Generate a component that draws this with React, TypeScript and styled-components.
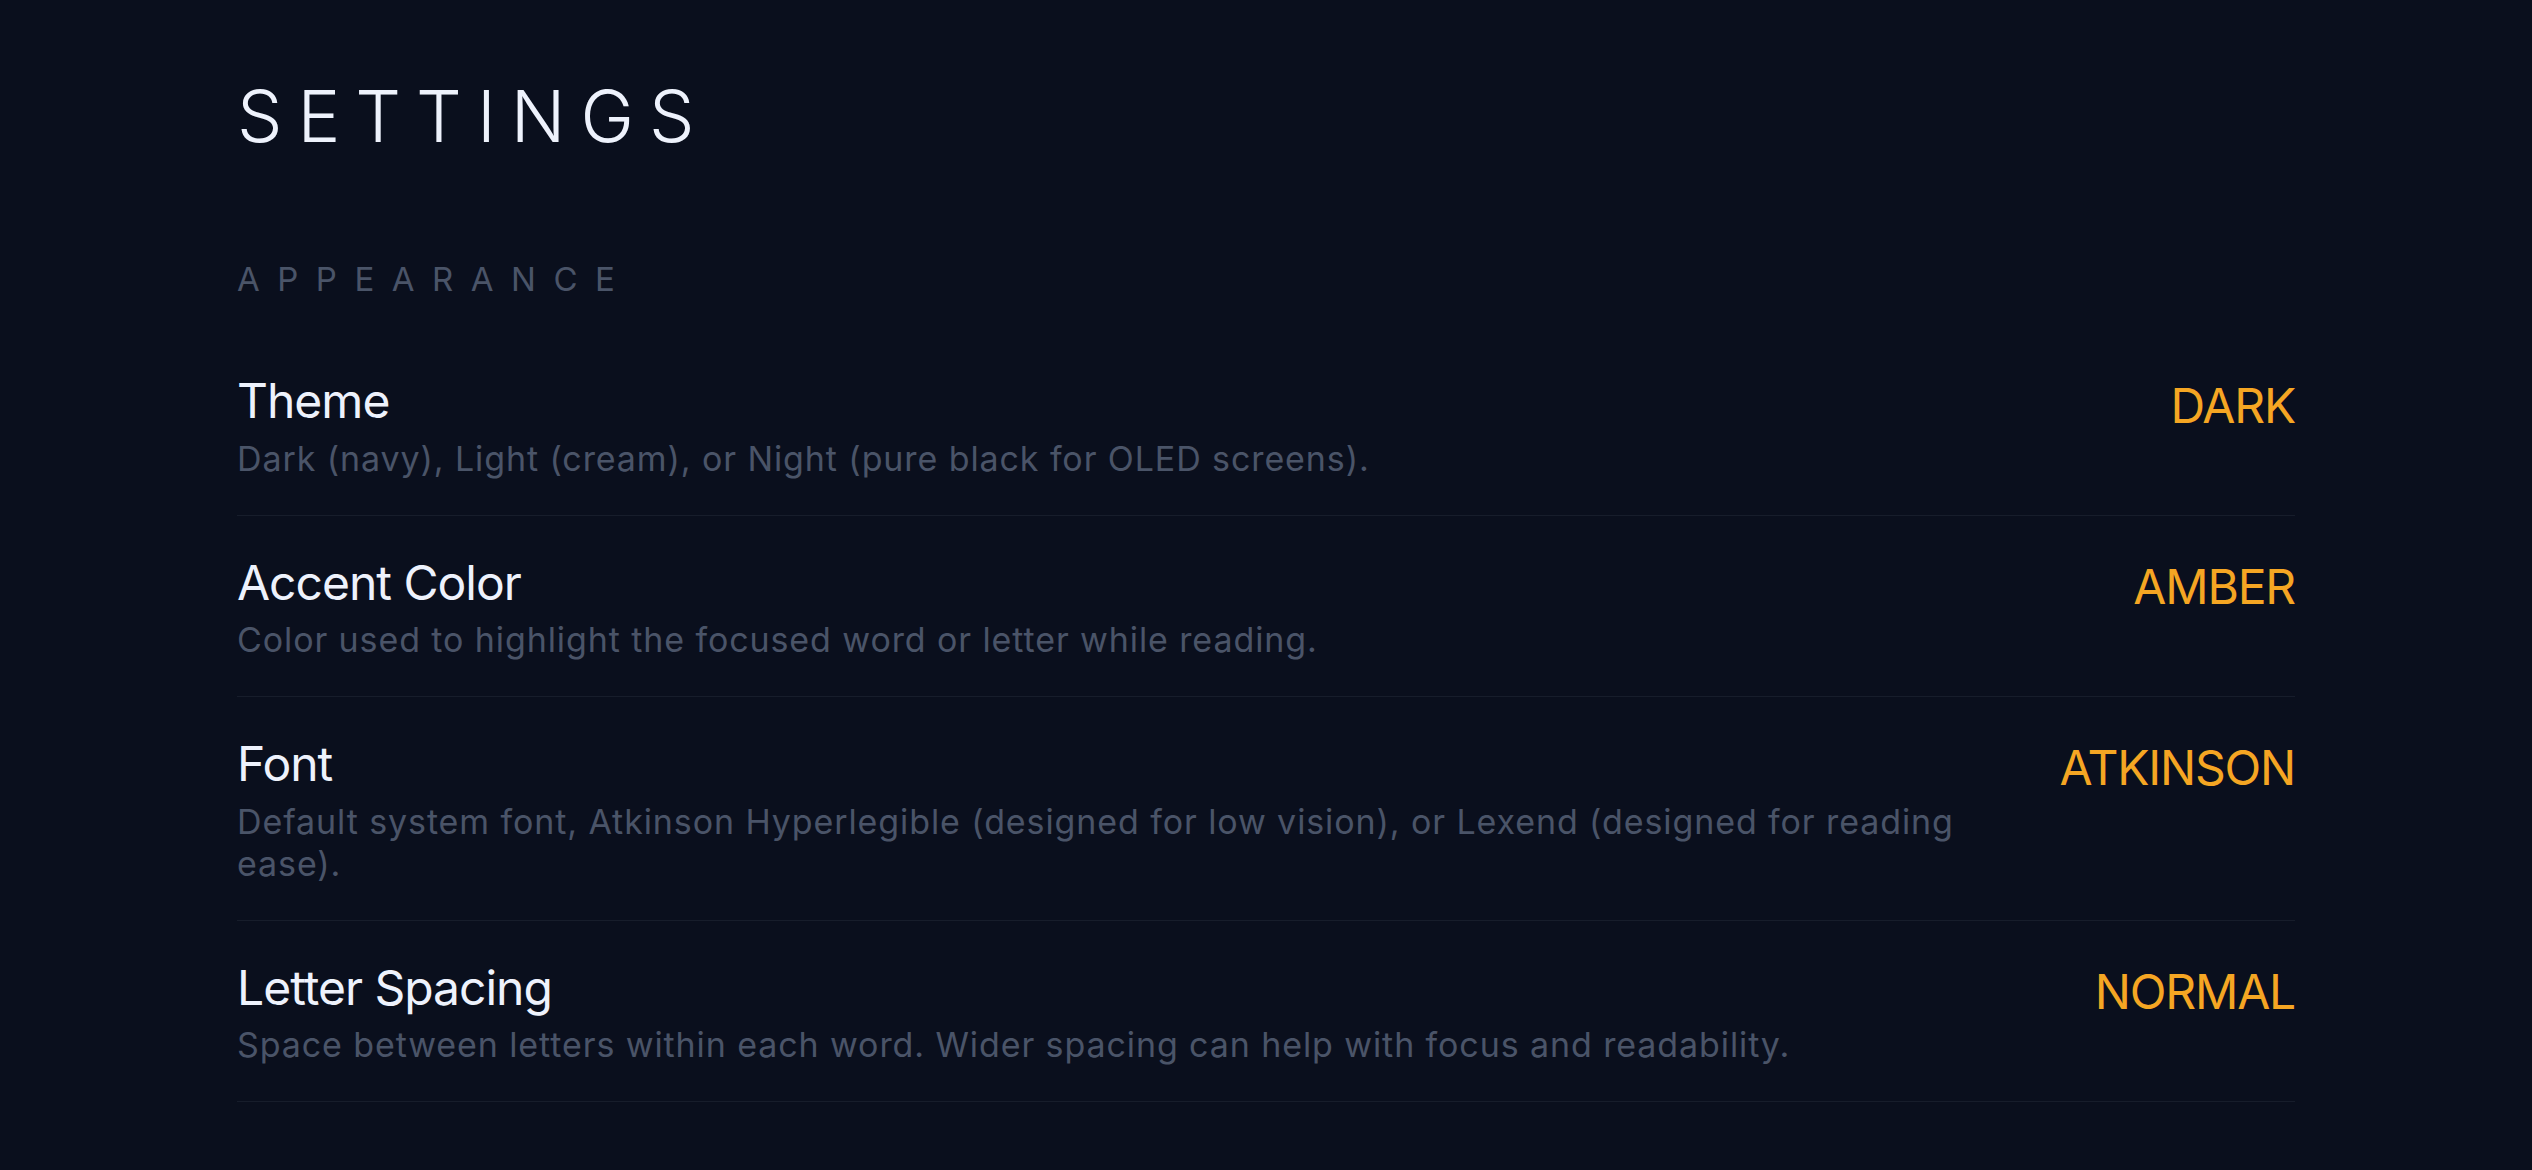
import React from "react";
import styled, { createGlobalStyle } from "styled-components";

const GlobalStyle = createGlobalStyle`
  html, body {
    margin: 0;
    padding: 0;
    background: #0a0f1d;
  }

  body {
    font-family: Inter, "Noto Sans", "Liberation Sans", sans-serif;
    -webkit-font-smoothing: antialiased;
  }
`;

const Page = styled.div`
  min-height: 100vh;
  background: #0a0f1d;
  color: #eef2fc;
`;

const Container = styled.main`
  max-width: 2058px;
  margin: 0 auto;
  padding-top: 72px;
`;

const PageTitle = styled.h1`
  margin: 0;
  font-size: 72px;
  font-weight: 300;
  line-height: normal;
  letter-spacing: 15px;
  color: #eef2fc;
`;

const SectionLabel = styled.h2`
  margin: 100px 0 35px;
  font-size: 33px;
  font-weight: 400;
  line-height: normal;
  letter-spacing: 17.5px;
  color: #4a5468;
`;

const List = styled.div`
  display: flex;
  flex-direction: column;
`;

const Row = styled.div`
  display: flex;
  align-items: flex-start;
  justify-content: space-between;
  gap: 48px;
  padding: 38px 0 35px;
  border-bottom: 1px solid #171d2b;
`;

const RowText = styled.div`
  flex: 1;
  min-width: 0;
`;

const RowTitle = styled.div`
  font-size: 48px;
  line-height: 1.2;
  letter-spacing: -1px;
  color: #eef2fc;
`;

const RowDesc = styled.div`
  margin-top: 8px;
  font-size: 34px;
  line-height: 42px;
  letter-spacing: 0.9px;
  color: #4a5468;
`;

const RowValue = styled.button<{ $nudge: number }>`
  flex-shrink: 0;
  margin: 0;
  padding: ${p => p.$nudge}px 0 0;
  border: 0;
  background: none;
  font-family: inherit;
  font-size: 48px;
  line-height: 1.2;
  letter-spacing: -1.2px;
  color: #f5a623;
  white-space: nowrap;
  cursor: pointer;
`;

interface ISetting {
  title: string;
  desc: string;
  value: string;
  nudge: number;
}

const settings: ISetting[] = [
  {
    title: "Theme",
    desc: "Dark (navy), Light (cream), or Night (pure black for OLED screens).",
    value: "DARK",
    nudge: 5,
  },
  {
    title: "Accent Color",
    desc: "Color used to highlight the focused word or letter while reading.",
    value: "AMBER",
    nudge: 4,
  },
  {
    title: "Font",
    desc:
      "Default system font, Atkinson Hyperlegible (designed for low vision), or Lexend (designed for reading ease).",
    value: "ATKINSON",
    nudge: 4,
  },
  {
    title: "Letter Spacing",
    desc:
      "Space between letters within each word. Wider spacing can help with focus and readability.",
    value: "NORMAL",
    nudge: 4,
  },
];

export default function App() {
  return (
    <Page>
      <GlobalStyle />
      <Container>
        <PageTitle>SETTINGS</PageTitle>
        <SectionLabel>APPEARANCE</SectionLabel>
        <List>
          {settings.map(s => (
            <Row key={s.title}>
              <RowText>
                <RowTitle>{s.title}</RowTitle>
                <RowDesc>{s.desc}</RowDesc>
              </RowText>
              <RowValue $nudge={s.nudge}>{s.value}</RowValue>
            </Row>
          ))}
        </List>
      </Container>
    </Page>
  );
}
